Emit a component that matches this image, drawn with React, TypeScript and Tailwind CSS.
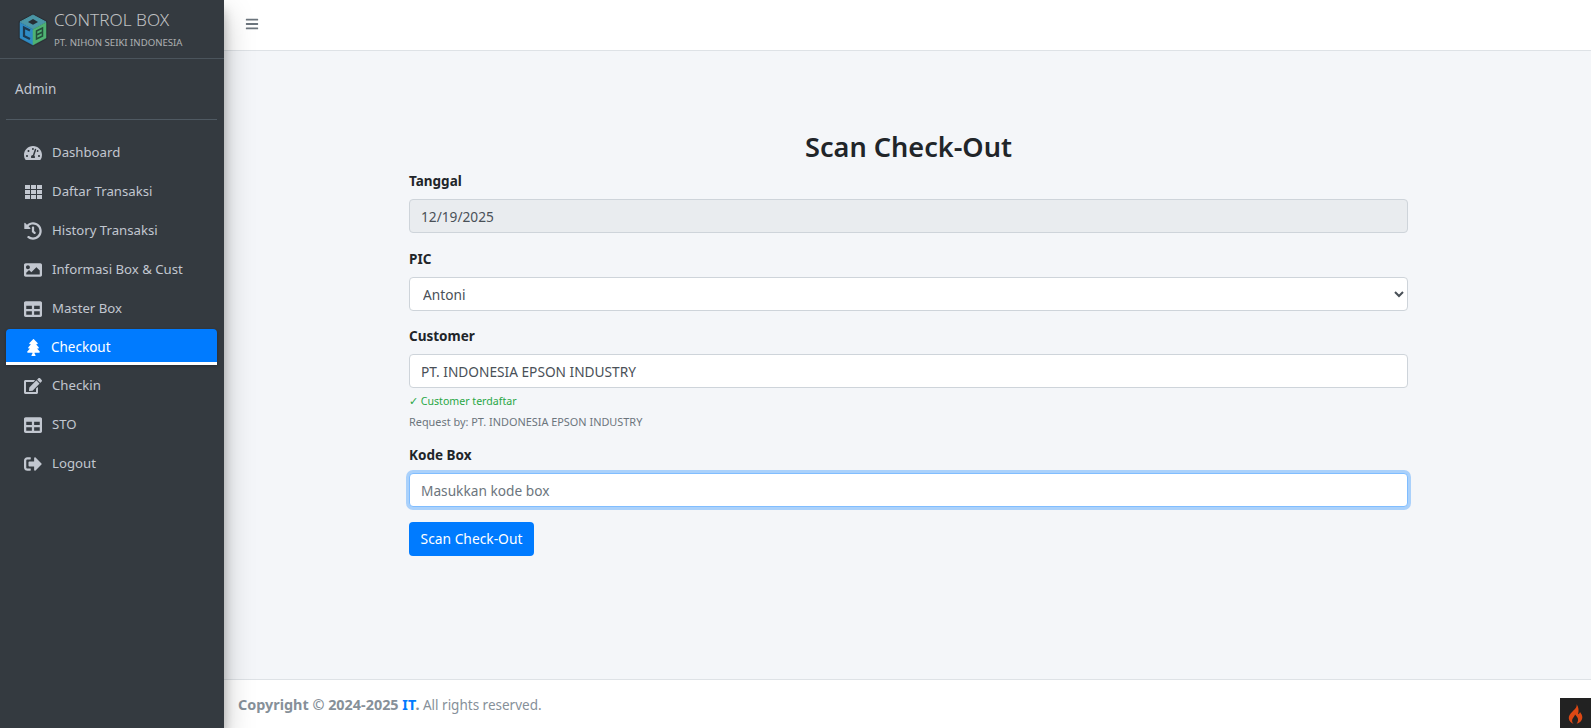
import React from "react";
import { FaTachometerAlt, FaHistory, FaImage, FaTable, FaTree, FaEdit, FaSignOutAlt, FaBars } from "react-icons/fa";

const font = { fontFamily: '"Noto Sans", "Open Sans", sans-serif' };

function Logo() {
  return (
    <svg width="32" height="36" viewBox="0 0 32 36" className="shrink-0">
      <polygon points="16,3 29,10 29,26 16,33 3,26 3,10" fill="#20262c" stroke="#2a3036" strokeWidth="3" strokeLinejoin="round" />
      <polygon points="16,3 29,10 16,17 3,10" fill="#4a96a6" stroke="#4a96a6" strokeLinejoin="round" />
      <polygon points="3,10.5 16,17.5 16,33 3,26" fill="#2f8bc4" stroke="#2f8bc4" strokeWidth="0.5" strokeLinejoin="round" />
      <polygon points="29,10.5 16,17.5 16,33 29,26" fill="#4fb273" stroke="#4fb273" strokeWidth="0.5" strokeLinejoin="round" />
      <polygon points="16,7 21,10 16,12.8 11,10" fill="#262d34" />
      <path d="M13,18.5 L7,15.5 L7,24 L13,27" fill="none" stroke="#1c3a50" strokeWidth="2.2" />
      <path d="M19.5,19 L25.5,16 L25.5,24 L19.5,27 Z M19.5,23 L25.5,20" fill="none" stroke="#234f3c" strokeWidth="1.5" />
    </svg>
  );
}

function ThIcon({ className }: { className?: string }) {
  const xs = [0, 6, 12];
  const ys = [0, 5, 10];
  return (
    <svg width="17" height="14" viewBox="0 0 17 14" className={className} fill="currentColor">
      {ys.map((y) => xs.map((x) => <rect key={`${x}-${y}`} x={x} y={y} width="5" height="4" />))}
    </svg>
  );
}

const items = [
  { label: "Dashboard", Icon: FaTachometerAlt, h: "h-[39px]" },
  { label: "Daftar Transaksi", Icon: ThIcon, h: "h-[39px]" },
  { label: "History Transaksi", Icon: FaHistory, h: "h-[39px]" },
  { label: "Informasi Box & Cust", Icon: FaImage, h: "h-[39px]" },
  { label: "Master Box", Icon: FaTable, h: "h-[39px]" },
];
const after = [
  { label: "Checkin", Icon: FaEdit, h: "h-[38px]" },
  { label: "STO", Icon: FaTable, h: "h-[39px]" },
  { label: "Logout", Icon: FaSignOutAlt, h: "h-[39px]" },
];

function NavRow({ label, Icon, h }: { label: string; Icon: React.ComponentType<{ className?: string }>; h: string }) {
  return (
    <div className={`${h} flex items-center pl-[23px] text-[#c2c7d0]`}>
      <span className="w-[20px] flex justify-center">
        <Icon className="text-[18px] text-[#c2c7d0]" />
      </span>
      <span className="ml-[9px] text-[13.2px]">{label}</span>
    </div>
  );
}

const inputBase =
  "block w-full h-[34px] px-[11px] pt-[1px] rounded-[4px] border text-[13.7px] text-[#495057] outline-none";

function Label({ children }: { children: React.ReactNode }) {
  return <div className="text-[13.5px] font-bold text-[#212529] leading-[20px] mb-[8px]">{children}</div>;
}

export default function App() {
  return (
    <div className="relative flex h-[728px] w-full overflow-hidden bg-[#f4f6f9]" style={font}>
      <aside className="relative z-10 w-[224px] shrink-0 bg-[#343a40] shadow-[0_14px_28px_rgba(0,0,0,0.25),0_10px_10px_rgba(0,0,0,0.22)]">
        <div className="h-[59px] border-b border-[#4b545c] flex items-start pl-[17px] pt-[12px]">
          <Logo />
          <div className="ml-[5px] -mt-[4px]">
            <div className="text-[17.2px] leading-[24px] font-light text-[rgba(255,255,255,0.7)]">CONTROL BOX</div>
            <div className="text-[9.6px] leading-[14px] mt-[4px] text-[rgba(255,255,255,0.6)]">PT. NIHON SEIKI INDONESIA</div>
          </div>
        </div>
        <div className="h-[61px] ml-[6px] mr-[7px] border-b border-[#4f5962] flex items-center pl-[9px] text-[13.5px] text-[#c2c7d0]">
          Admin
        </div>
        <nav className="ml-[6px] mr-[7px] pt-[13px]">
          <div className="-ml-[6px]">
            {items.map((i) => (
              <NavRow key={i.label} {...i} />
            ))}
          </div>
          <div className="mt-[1px] h-[36px] rounded-t-[4px] bg-[#007bff] border-b-[3px] border-white flex items-center pl-[17px] pt-[3px] text-white shadow-[0_1px_3px_rgba(0,0,0,0.3)]">
            <span className="w-[20px] flex justify-center">
              <FaTree className="text-[17px]" />
            </span>
            <span className="ml-[8px] text-[13.5px]">Checkout</span>
          </div>
          <div className="-ml-[6px] pt-[2px]">
            {after.map((i) => (
              <NavRow key={i.label} {...i} />
            ))}
          </div>
        </nav>
      </aside>

      <div className="flex-1 min-w-0 flex flex-col">
        <header className="h-[51px] shrink-0 bg-white border-b border-[#dee2e6] flex items-center pl-[21px] pb-[2px]">
          <FaBars className="text-[14px] text-[#6c757d]" />
        </header>
        <main className="flex-1 min-h-0 pt-[75px] pl-[185px] pr-[183px]">
          <h1 className="text-center text-[27.1px] leading-[42px] font-semibold text-[#212529]">Scan Check-Out</h1>
          <div className="mt-[3px]">
            <Label>Tanggal</Label>
          </div>
          <input readOnly value="12/19/2025" className={`${inputBase} bg-[#e9ecef] border-[#ced4da]`} />
          <div className="mt-[16px]">
            <Label>PIC</Label>
          </div>
          <select className={`${inputBase} pl-[9px] bg-white border-[#ced4da]`} defaultValue="Antoni">
            <option>Antoni</option>
          </select>
          <div className="mt-[15px]">
            <Label>Customer</Label>
          </div>
          <input readOnly value="PT. INDONESIA EPSON INDUSTRY" className={`${inputBase} bg-white border-[#ced4da]`} />
          <div className="mt-[5px] text-[10.6px] leading-[16px] text-[#28a745]">✓ Customer terdaftar</div>
          <div className="mt-[5px] text-[10.9px] leading-[16px] text-[#6c757d]">Request by: PT. INDONESIA EPSON INDUSTRY</div>
          <div className="mt-[15px]">
            <Label>Kode Box</Label>
          </div>
          <input
            placeholder="Masukkan kode box"
            className={`${inputBase} bg-white border-[#80bdff] shadow-[0_0_0_3px_rgba(0,123,255,0.3)] placeholder:text-[#6c757d]`}
          />
          <button className="mt-[15px] block h-[34px] w-[125px] rounded-[4px] bg-[#007bff] text-white text-[13.8px]">
            Scan Check-Out
          </button>
        </main>
        <footer className="h-[49px] shrink-0 bg-white border-t border-[#dee2e6] flex items-center pl-[14px] pt-[2px] text-[13.5px] text-[#869099]">
          <span>
            <b className="font-bold text-[14.4px]">Copyright © 2024-2025 <span className="text-[#007bff]">IT</span>.</b> All rights reserved.
          </span>
        </footer>
      </div>

      <div className="absolute right-0 bottom-0 z-20 w-[31px] h-[30px] bg-[#222222] flex items-center justify-center pt-[2px]">
        <svg width="15" height="20" viewBox="0 0 15 20" fill="#dd4814">
          <path d="M8.5 0 C9.5 3 7 5 4.5 7.5 C2 10 0.5 12 0.8 14.5 C1 17 3 19 5.5 19.8 C3.8 18 3.6 16 5 14 C5.8 12.8 6.8 12 7 10.5 C8.5 12 10.5 14 10 16.5 C9.7 18 9.2 19 8.5 19.8 C11.5 19.2 14 17 14.3 14 C14.6 11 13 9.5 12 8 C11.7 9.2 11 10 10 10.2 C11 7 10.8 3 8.5 0 Z" />
        </svg>
      </div>
    </div>
  );
}
